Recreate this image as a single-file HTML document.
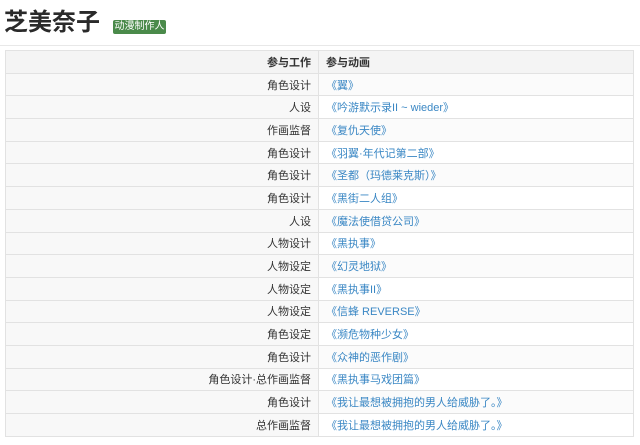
<!DOCTYPE html>
<html><head><meta charset="utf-8"><style>
body{margin:0;background:#fff;font-family:"Liberation Sans","Noto Sans CJK SC",sans-serif;width:640px;height:445px;overflow:hidden;}
h1{position:absolute;left:4px;top:6px;margin:0;font-size:24px;font-weight:bold;color:#2a2a2a;line-height:34px;}
.badge{position:absolute;left:113px;top:20px;width:53px;height:14px;background:#4a8a4a;color:#fff;font-size:10px;line-height:14px;text-align:center;border-radius:2px;}
.hr{position:absolute;left:0;top:45px;width:640px;height:1px;background:#e8e8e8;}
table{position:absolute;left:5px;top:50px;width:629px;border-collapse:collapse;font-size:11px;color:#333;}
td{height:21.7px;border-top:1px solid #e2e2e2;padding:0 7px;}
td:first-child{width:298px;text-align:right;background:#f8f8f8;border-right:1px solid #e2e2e2;}
tr:nth-child(even) td:last-child{background:#fbfbfb;}
tr:first-child td{font-weight:bold;background:#f4f4f4;}
td a{color:#3a87c4;text-decoration:none;}
table{border:1px solid #e2e2e2;}
</style></head><body>
<h1>芝美奈子</h1><div class="badge">动漫制作人</div>
<div class="hr"></div>
<table>
<tr><td>参与工作</td><td>参与动画</td></tr>
<tr><td>角色设计</td><td><a>《翼》</a></td></tr>
<tr><td>人设</td><td><a>《吟游默示录II ~ wieder》</a></td></tr>
<tr><td>作画监督</td><td><a>《复仇天使》</a></td></tr>
<tr><td>角色设计</td><td><a>《羽翼·年代记第二部》</a></td></tr>
<tr><td>角色设计</td><td><a>《圣都（玛德莱克斯）》</a></td></tr>
<tr><td>角色设计</td><td><a>《黑街二人组》</a></td></tr>
<tr><td>人设</td><td><a>《魔法使借贷公司》</a></td></tr>
<tr><td>人物设计</td><td><a>《黑执事》</a></td></tr>
<tr><td>人物设定</td><td><a>《幻灵地狱》</a></td></tr>
<tr><td>人物设定</td><td><a>《黑执事II》</a></td></tr>
<tr><td>人物设定</td><td><a>《信蜂 REVERSE》</a></td></tr>
<tr><td>角色设定</td><td><a>《濒危物种少女》</a></td></tr>
<tr><td>角色设计</td><td><a>《众神的恶作剧》</a></td></tr>
<tr><td>角色设计·总作画监督</td><td><a>《黑执事马戏团篇》</a></td></tr>
<tr><td>角色设计</td><td><a>《我让最想被拥抱的男人给威胁了。》</a></td></tr>
<tr><td>总作画监督</td><td><a>《我让最想被拥抱的男人给威胁了。》</a></td></tr>
</table>
</body></html>
